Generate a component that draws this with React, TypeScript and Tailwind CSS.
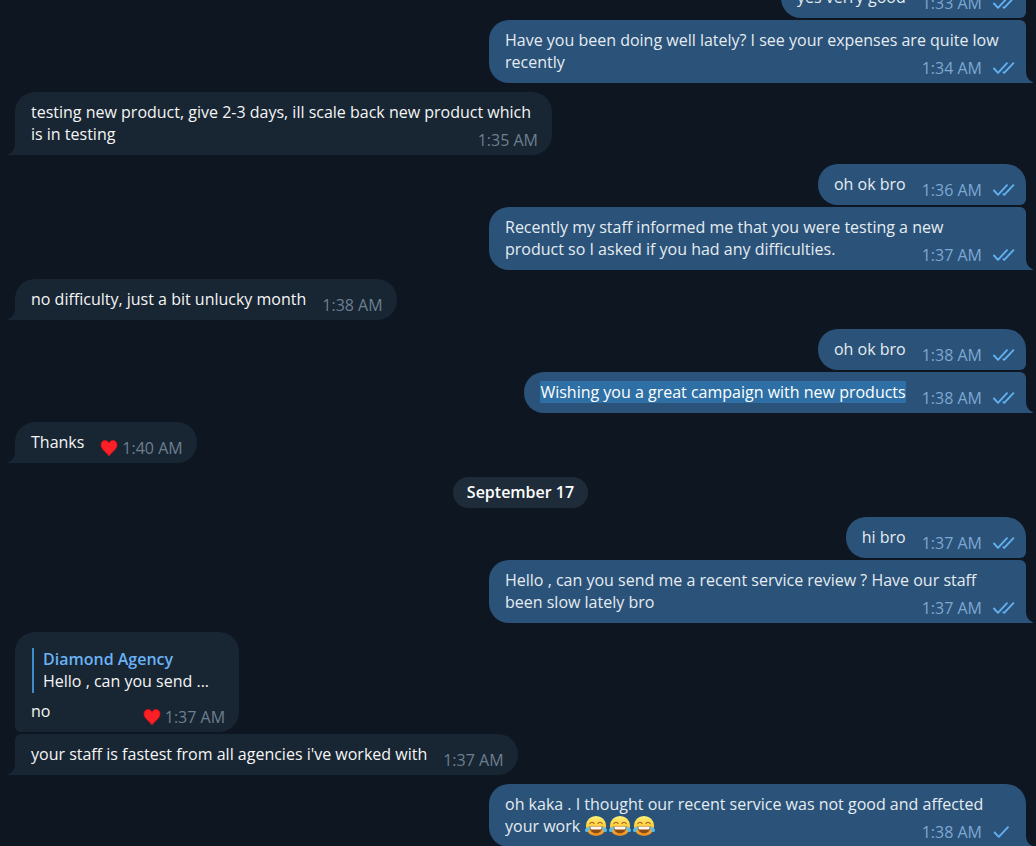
import type { ReactNode } from "react";

interface Message {
  text: string;
  time: string;
  out?: boolean;
  // read = double tick, sent = single tick
  status?: "read" | "sent";
  selected?: boolean;
  liked?: boolean;
  laughs?: number;
  reply?: { author: string; text: string };
}

interface Day {
  date?: string;
  groups: Message[][];
}

const days: Day[] = [
  {
    groups: [
      [
        { text: "yes verry good", time: "1:33 AM", out: true, status: "read" },
        {
          text: "Have you been doing well lately? I see your expenses are quite low recently",
          time: "1:34 AM",
          out: true,
          status: "read",
        },
      ],
      [{ text: "testing new product, give 2-3 days, ill scale back new product which is in testing", time: "1:35 AM" }],
      [
        { text: "oh ok bro", time: "1:36 AM", out: true, status: "read" },
        {
          text: "Recently my staff informed me that you were testing a new\nproduct so I asked if you had any difficulties.",
          time: "1:37 AM",
          out: true,
          status: "read",
        },
      ],
      [{ text: "no difficulty, just a bit unlucky month", time: "1:38 AM" }],
      [
        { text: "oh ok bro", time: "1:38 AM", out: true, status: "read" },
        {
          text: "Wishing you a great campaign with new products",
          time: "1:38 AM",
          out: true,
          status: "read",
          selected: true,
        },
      ],
      [{ text: "Thanks", time: "1:40 AM", liked: true }],
    ],
  },
  {
    date: "September 17",
    groups: [
      [
        { text: "hi bro", time: "1:37 AM", out: true, status: "read" },
        {
          text: "Hello , can you send me a recent service review ? Have our staff been slow lately bro",
          time: "1:37 AM",
          out: true,
          status: "read",
        },
      ],
      [
        {
          text: "no",
          time: "1:37 AM",
          liked: true,
          reply: { author: "Diamond Agency", text: "Hello , can you send ..." },
        },
        { text: "your staff is fastest from all agencies i've worked with", time: "1:37 AM" },
      ],
      [
        {
          text: "oh kaka . I thought our recent service was not good and affected your work ",
          time: "1:38 AM",
          out: true,
          status: "sent",
          laughs: 3,
        },
      ],
    ],
  },
];

function Ticks({ status }: { status: "read" | "sent" }) {
  return (
    <svg
      viewBox="0 0 24 14"
      className="ml-2.5 h-3.5 w-6 shrink-0"
      fill="none"
      stroke="#62b0f0"
      strokeWidth="1.9"
      strokeLinecap="round"
      strokeLinejoin="round"
      aria-label={status}
    >
      {status === "read" ? (
        <>
          <path d="M2 7.5 L6 11.8 L15 2.2" />
          <path d="M11.4 11.2 L12.2 11.8 L21.4 2.2" />
        </>
      ) : (
        <path d="M2.6 7.5 L6.8 11.8 L16 2.2" />
      )}
    </svg>
  );
}

function Heart() {
  return (
    <svg viewBox="0 0 18 18" className="mr-1 h-[18px] w-[18px] shrink-0" aria-label="heart">
      <path
        d="M9 17 C7.5 13.8 1 10.8 1 5.9 C1 3 2.8 1.4 5 1.4 C6.9 1.4 8.3 2.5 9 4.1 C9.7 2.5 11.1 1.4 13 1.4 C15.2 1.4 17 3 17 5.9 C17 10.8 10.5 13.8 9 17 Z"
        fill="#fb2025"
        stroke="#d8101c"
        strokeWidth="0.7"
      />
    </svg>
  );
}

function Laugh() {
  return (
    <svg viewBox="0 0 24 22" className="inline-block h-[22px] w-6 align-top" aria-label="face with tears of joy">
      <defs>
        <linearGradient id="face" x1="0" y1="0" x2="0" y2="1">
          <stop offset="0" stopColor="#fff07a" />
          <stop offset="0.5" stopColor="#fdcf3a" />
          <stop offset="1" stopColor="#e8871f" />
        </linearGradient>
      </defs>
      <circle cx="12" cy="11" r="10.1" fill="url(#face)" />
      <path d="M5.8 8.6 Q7.8 6 10 8.4" fill="none" stroke="#a8641b" strokeWidth="1.2" strokeLinecap="round" />
      <path d="M14 8.4 Q16.2 6 18.2 8.6" fill="none" stroke="#a8641b" strokeWidth="1.2" strokeLinecap="round" />
      <path d="M5.4 11.2 H18.6 C18.4 15.8 15.8 18.2 12 18.2 C8.2 18.2 5.6 15.8 5.4 11.2 Z" fill="#8c4a18" />
      <path d="M6.2 11.6 H17.8 C17.7 12.9 17.4 13.8 16.9 14.6 H7.1 C6.6 13.8 6.3 12.9 6.2 11.6 Z" fill="#fdf8ec" />
      <path d="M5.4 11.2 C6 14 4.6 17 2.8 17 C0.8 17 0.4 14.8 1.8 13.4 C2.8 12.4 4.2 12.4 5.4 11.2 Z" fill="#55bdf0" />
      <path d="M18.6 11.2 C18 14 19.4 17 21.2 17 C23.2 17 23.6 14.8 22.2 13.4 C21.2 12.4 19.8 12.4 18.6 11.2 Z" fill="#55bdf0" />
    </svg>
  );
}

function Tail({ out }: { out?: boolean }) {
  return out ? (
    <svg viewBox="0 0 7 12" className="absolute bottom-0 left-full h-3 w-[7px]" fill="#2b5278">
      <path d="M0 0 C0 5.5 2 9 6.6 11 C7 11.4 6.8 12 6.2 12 H0 Z" />
    </svg>
  ) : (
    <svg viewBox="0 0 7 12" className="absolute right-full bottom-0 h-3 w-[7px]" fill="#182533">
      <path d="M7 0 C7 5.5 5 9 0.4 11 C0 11.4 0.2 12 0.8 12 H7 Z" />
    </svg>
  );
}

function Bubble({ message, first, last }: { message: Message; first: boolean; last: boolean }) {
  const { out, reply, status, selected, liked, laughs = 0 } = message;

  const corners = out
    ? `rounded-l-[20px] ${first ? "rounded-tr-[20px]" : "rounded-tr-md"} ${last ? "rounded-br-none" : "rounded-br-md"}`
    : `rounded-r-[20px] ${first ? "rounded-tl-[20px]" : "rounded-tl-md"} ${last ? "rounded-bl-none" : "rounded-bl-md"}`;

  const body: ReactNode = selected ? <mark className="bg-[#2e70a5] text-white">{message.text}</mark> : message.text;

  // a message with a line break of its own always takes the full bubble width
  const width = message.text.includes("\n") ? "w-full max-w-[537px]" : "max-w-[537px]";

  return (
    <div
      className={`relative px-4 pt-[9px] pb-2.5 whitespace-pre-line ${width} ${corners} ${
        out ? "self-end bg-[#2b5278] text-[#e4ecf2]" : "self-start bg-[#182533] text-[#f5f5f5]"
      }`}
    >
      {reply && (
        <blockquote className="my-[7px] ml-px border-l-2 border-[#3e8ccc] pr-3.5 pb-px pl-[9px]">
          <div className="font-semibold text-[#6ab3f3]">{reply.author}</div>
          <div>{reply.text}</div>
        </blockquote>
      )}
      {body}
      {Array.from({ length: laughs }, (_, i) => (
        <Laugh key={i} />
      ))}
      <span
        className={`float-right mt-1.5 -mb-1.5 ml-4 flex items-center ${
          out ? "-mr-1.5 text-[#7da8d3]" : "-mr-0.5 text-[#6d7f8f]"
        }`}
      >
        {liked && <Heart />}
        <time>{message.time}</time>
        {status && <Ticks status={status} />}
      </span>
      {last && <Tail out={out} />}
    </div>
  );
}

export default function App() {
  return (
    <div className="h-screen overflow-hidden bg-[#0e1621] font-['Open_Sans',sans-serif] text-base leading-[22px]">
      <main className="-mt-[23px] flex flex-col gap-[9px] pr-2.5 pl-[15px]">
        {days.map((day, d) => (
          <section key={d} className="flex flex-col gap-[9px]">
            {day.date && (
              <h2 className="mt-[5px] self-center rounded-full bg-[#1e2c3a] px-3.5 pt-1 pb-[5px] font-semibold text-white">
                {day.date}
              </h2>
            )}
            {day.groups.map((group, g) => (
              <div key={g} className="flex flex-col gap-0.5">
                {group.map((message, i) => (
                  <Bubble key={i} message={message} first={i === 0} last={i === group.length - 1} />
                ))}
              </div>
            ))}
          </section>
        ))}
      </main>
    </div>
  );
}
